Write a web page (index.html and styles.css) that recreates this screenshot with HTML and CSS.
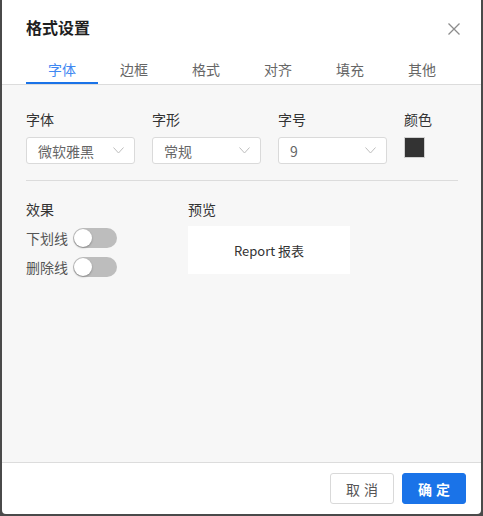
FILE: index.html
```html
<!DOCTYPE html>
<html lang="zh">
<head>
<meta charset="utf-8">
<title>格式设置</title>
<link rel="stylesheet" href="styles.css">
</head>
<body>
<div class="dialog">
  <div class="header">
    <div class="title">格式设置</div>
    <svg class="close" width="12" height="12" viewBox="0 0 12 12"><path d="M0.5 0.5 L11.5 11.5 M11.5 0.5 L0.5 11.5" stroke="#8c8c8c" stroke-width="1.3" fill="none"/></svg>
  </div>
  <div class="tabs">
    <div class="tab active">字体</div>
    <div class="tab">边框</div>
    <div class="tab">格式</div>
    <div class="tab">对齐</div>
    <div class="tab">填充</div>
    <div class="tab">其他</div>
  </div>
  <div class="content">
    <div class="fields">
      <div class="field">
        <div class="label">字体</div>
        <div class="select"><span>微软雅黑</span><svg class="chev" width="11" height="7" viewBox="0 0 11 7"><path d="M0.5 0.5 L5.5 6 L10.5 0.5" stroke="#bdbdbd" stroke-width="1" fill="none"/></svg></div>
      </div>
      <div class="field">
        <div class="label">字形</div>
        <div class="select"><span>常规</span><svg class="chev" width="11" height="7" viewBox="0 0 11 7"><path d="M0.5 0.5 L5.5 6 L10.5 0.5" stroke="#bdbdbd" stroke-width="1" fill="none"/></svg></div>
      </div>
      <div class="field">
        <div class="label">字号</div>
        <div class="select"><span>9</span><svg class="chev" width="11" height="7" viewBox="0 0 11 7"><path d="M0.5 0.5 L5.5 6 L10.5 0.5" stroke="#bdbdbd" stroke-width="1" fill="none"/></svg></div>
      </div>
      <div class="field color-field">
        <div class="label">颜色</div>
        <div class="swatch"></div>
      </div>
    </div>
    <div class="divider"></div>
    <div class="lower">
      <div class="effects">
        <div class="label">效果</div>
        <div class="toggle-row"><span class="toggle-label">下划线</span><span class="toggle"><span class="knob"></span></span></div>
        <div class="toggle-row"><span class="toggle-label">删除线</span><span class="toggle"><span class="knob"></span></span></div>
      </div>
      <div class="preview-col">
        <div class="label">预览</div>
        <div class="preview">Report 报表</div>
      </div>
    </div>
  </div>
  <div class="footer">
    <button class="btn cancel">取消</button>
    <button class="btn ok">确定</button>
  </div>
</div>
</body>
</html>
```

FILE: styles.css
```css
* { box-sizing: border-box; }
html, body { margin: 0; padding: 0; }
body {
  background: #4a4a4a;
  height: 516px;
  font-family: "Noto Sans CJK SC", "Noto Sans", sans-serif;
  padding: 0 2px 2px 2px;
}
.dialog {
  height: 514px;
  background: #fff;
  border-radius: 0 0 4px 4px;
  display: flex;
  flex-direction: column;
  overflow: hidden;
}
.header {
  height: 56px;
  display: flex;
  align-items: center;
  justify-content: space-between;
  padding: 0 21px 0 24px;
}
.title {
  font-size: 16px;
  font-weight: bold;
  color: #1f1f1f;
  line-height: 20px;
  margin-top: -2px;
}
.close { display: block; margin-top: 1px; }
.tabs {
  display: flex;
  padding-left: 24px;
  border-bottom: 1px solid #dcdcdc;
}
.tab {
  width: 72px;
  height: 28px;
  text-align: center;
  font-size: 14px;
  line-height: 26px;
  color: #666;
  border-bottom: 2px solid transparent;
}
.tab.active {
  color: #3f88f2;
  border-bottom-color: #1a73e8;
}
.content {
  flex: 1;
  background: #f7f7f7;
  padding: 24px 23px 0 24px;
}
.fields {
  display: flex;
  gap: 17px;
}
.field { width: 109px; flex: none; }
.field.color-field { width: auto; }
.label {
  font-size: 14px;
  line-height: 20px;
  color: #333;
  margin-bottom: 8px;
}
.select {
  height: 27px;
  background: #fff;
  border: 1px solid #dadada;
  border-radius: 3px;
  display: flex;
  align-items: center;
  justify-content: space-between;
  padding: 0 10px 0 11px;
  font-size: 14px;
  color: #666;
}
.chev { display: block; }
.swatch {
  width: 21px;
  height: 21px;
  background: #333;
  border: 1px solid #d0d0d0;
}
.divider {
  height: 1px;
  background: #dcdcdc;
  margin: 16px 0 0 0;
}
.lower {
  display: flex;
  padding-top: 18px;
}
.effects { width: 162px; flex: none; }
.effects .label { margin-bottom: 9px; }
.toggle-row {
  display: flex;
  align-items: center;
  height: 20px;
  margin-bottom: 9px;
}
.toggle-label {
  font-size: 14px;
  color: #555;
  width: 47px;
}
.toggle {
  position: relative;
  width: 44px;
  height: 20px;
  border-radius: 10px;
  background: #bdbdbd;
}
.knob {
  position: absolute;
  left: 1px;
  top: 1px;
  width: 18px;
  height: 18px;
  border-radius: 50%;
  background: #fff;
  box-shadow: 0 1px 2px rgba(0,0,0,0.3);
}
.preview-col .label { margin-bottom: 7px; }
.preview {
  width: 162px;
  height: 48px;
  background: #fff;
  display: flex;
  align-items: center;
  justify-content: center;
  font-size: 13px;
  color: #333;
}
.footer {
  height: 52px;
  border-top: 1px solid #dcdcdc;
  display: flex;
  justify-content: flex-end;
  align-items: flex-start;
  gap: 8px;
  padding: 10px 15px 0 0;
}
.btn {
  width: 64px;
  height: 31px;
  border-radius: 3px;
  font-family: inherit;
  font-size: 14px;
  letter-spacing: 4px;
  padding: 0 0 0 4px;
  cursor: pointer;
}
.cancel {
  background: #fff;
  border: 1px solid #d9d9d9;
  color: #555;
}
.ok {
  background: #1a73e8;
  border: 1px solid #1a73e8;
  color: #fff;
  font-weight: bold;
}
```
